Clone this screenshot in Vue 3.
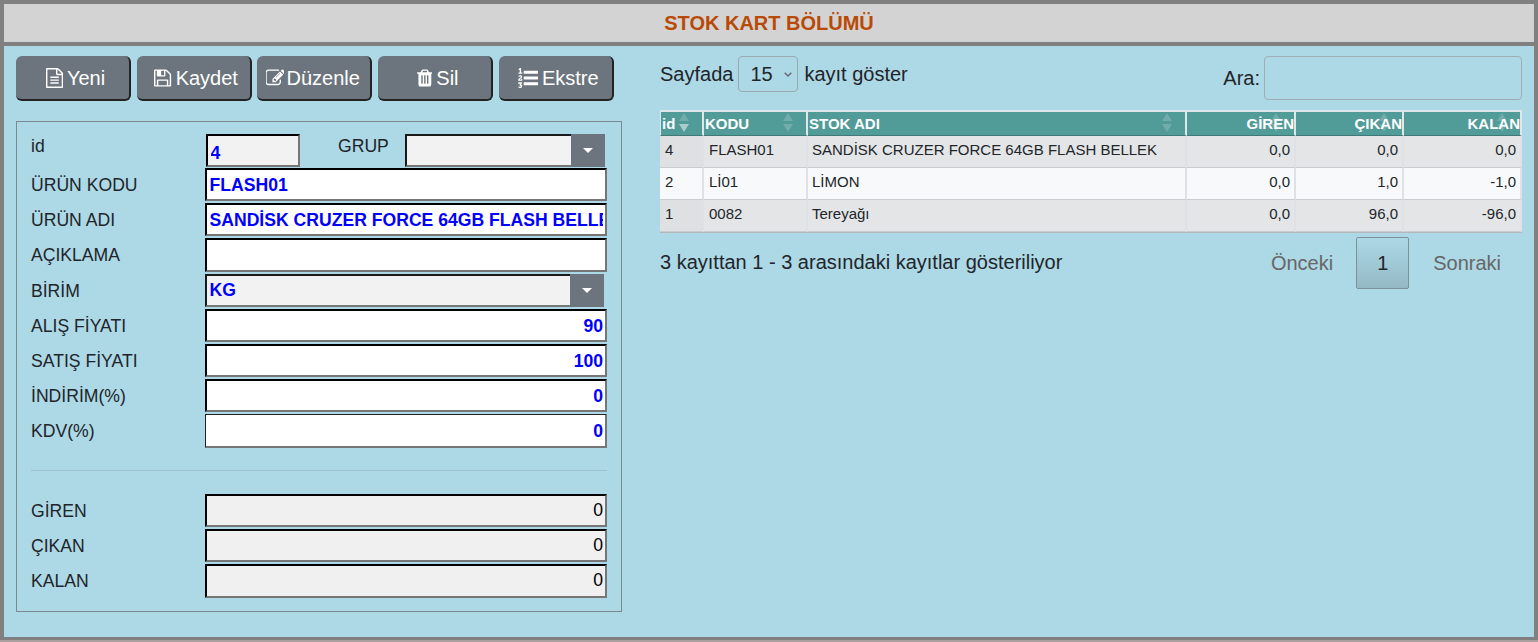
<script setup>
const icons = {
  file: { w: 1536, x: 128, d: 'M1596 380q28 28 48 76t20 88v1152q0 40-28 68t-68 28h-1344q-40 0-68-28t-28-68v-1600q0-40 28-68t68-28h896q40 0 88 20t76 48zm-444-244v376h376q-10-29-22-41l-313-313q-12-12-41-22zm384 1528v-1024h-416q-40 0-68-28t-28-68v-416h-768v1536h1280zm-1024-864q0-14 9-23t23-9h704q14 0 23 9t9 23v64q0 14-9 23t-23 9h-704q-14 0-23-9t-9-23v-64zm736 224q14 0 23 9t9 23v64q0 14-9 23t-23 9h-704q-14 0-23-9t-9-23v-64q0-14 9-23t23-9h704zm0 256q14 0 23 9t9 23v64q0 14-9 23t-23 9h-704q-14 0-23-9t-9-23v-64q0-14 9-23t23-9h704z' },
  save: { w: 1536, x: 128, d: 'M512 1536h768v-384h-768v384zm896 0h128v-896q0-14-10-38.5t-20-34.5l-281-281q-10-10-34-20t-39-10v416q0 40-28 68t-68 28h-576q-40 0-68-28t-28-68v-416h-128v1280h128v-416q0-40 28-68t68-28h832q40 0 68 28t28 68v416zm-384-928v-320q0-13-9.5-22.5t-22.5-9.5h-192q-13 0-22.5 9.5t-9.5 22.5v320q0 13 9.5 22.5t22.5 9.5h192q13 0 22.5-9.5t9.5-22.5zm640 32v928q0 40-28 68t-68 28h-1344q-40 0-68-28t-28-68v-1344q0-40 28-68t68-28h928q40 0 88 20t76 48l280 280q28 28 48 76t20 88z' },
  edit: { w: 1664, x: 64, d: 'M888 1184l116-116-152-152-116 116v56h96v96h56zm440-720q-16-16-33 1l-350 350q-17 17-1 33t33-1l350-350q17-17 1-33zm80 594v190q0 119-84.5 203.5t-203.5 84.5h-832q-119 0-203.5-84.5t-84.5-203.5v-832q0-119 84.5-203.5t203.5-84.5h832q63 0 117 25 15 7 18 23 3 17-9 29l-49 49q-14 14-32 8-23-6-45-6h-832q-66 0-113 47t-47 113v832q0 66 47 113t113 47h832q66 0 113-47t47-113v-126q0-13 9-22l64-64q15-15 35-7t20 29zm-96-738l288 288-672 672h-288v-288zm444 132l-92 92-288-288 92-92q28-28 68-28t68 28l152 152q28 28 28 68t-28 68z' },
  trash: { w: 1408, x: 192, d: 'M704 1376v-704q0-14-9-23t-23-9h-64q-14 0-23 9t-9 23v704q0 14 9 23t23 9h64q14 0 23-9t9-23zm256 0v-704q0-14-9-23t-23-9h-64q-14 0-23 9t-9 23v704q0 14 9 23t23 9h64q14 0 23-9t9-23zm256 0v-704q0-14-9-23t-23-9h-64q-14 0-23 9t-9 23v704q0 14 9 23t23 9h64q14 0 23-9t9-23zm-544-992h448l-48-117q-7-9-17-11h-317q-10 2-17 11zm928 32v64q0 14-9 23t-23 9h-96v948q0 83-47 143.5t-113 60.5h-832q-66 0-113-58.5t-47-141.5v-952h-96q-14 0-23-9t-9-23v-64q0-14 9-23t23-9h309l70-167q15-37 54-63t79-26h320q40 0 79 26t54 63l70 167h309q14 0 23 9t9 23z' },
  list: { w: 1792, x: 0, d: 'M381 1620q0 80-54.5 126t-135.5 46q-106 0-172-66l57-88q49 45 106 45 29 0 50.5-14.5t21.5-42.5q0-64-105-56l-26-56q8-10 32.5-43.5t42.5-54 37-38.5v-1q-16 0-48.5 1t-48.5 1v53h-106v-152h333v88l-95 115q51 12 81 49t30 88zm2-627v159h-362q-6-36-6-54 0-51 23.5-93t56.5-68 66-47.5 56.5-43.5 23.5-45q0-25-14.5-38.5t-39.5-13.5q-46 0-81 58l-85-59q24-51 71.5-79.5t105.5-28.5q73 0 123 41.5t50 112.5q0 50-34 91.5t-75 64.5-75.5 50.5-35.5 52.5h127v-60h105zm1409 319v192q0 13-9.5 22.5t-22.5 9.5h-1216q-13 0-22.5-9.5t-9.5-22.5v-192q0-14 9-23t23-9h1216q13 0 22.5 9.5t9.5 22.5zm-1408-899v99h-335v-99h107q0-41 .5-122t.5-121v-12h-2q-8 17-50 54l-71-76 136-127h106v404h108zm1408 387v192q0 13-9.5 22.5t-22.5 9.5h-1216q-13 0-22.5-9.5t-9.5-22.5v-192q0-14 9-23t23-9h1216q13 0 22.5 9.5t9.5 22.5zm0-512v192q0 13-9.5 22.5t-22.5 9.5h-1216q-13 0-22.5-9.5t-9.5-22.5v-192q0-13 9.5-22.5t22.5-9.5h1216q13 0 22.5 9.5t9.5 22.5z' }
}
const buttons = [
  { label: 'Yeni', icon: icons.file },
  { label: 'Kaydet', icon: icons.save },
  { label: 'Düzenle', icon: icons.edit, tight: true },
  { label: 'Sil', icon: icons.trash },
  { label: 'Ekstre', icon: icons.list }
]
const mainFields = [
  { label: 'ÜRÜN KODU', value: 'FLASH01' },
  { label: 'ÜRÜN ADI', value: 'SANDİSK CRUZER FORCE 64GB FLASH BELLEK' },
  { label: 'AÇIKLAMA', value: '' }
]
const priceFields = [
  { label: 'ALIŞ FİYATI', value: '90' },
  { label: 'SATIŞ FİYATI', value: '100' },
  { label: 'İNDİRİM(%)', value: '0' },
  { label: 'KDV(%)', value: '0', thin: true }
]
const totals = ['GİREN', 'ÇIKAN', 'KALAN']
const rows = [
  ['4', 'FLASH01', 'SANDİSK CRUZER FORCE 64GB FLASH BELLEK', '0,0', '0,0', '0,0'],
  ['2', 'Lİ01', 'LİMON', '0,0', '1,0', '-1,0'],
  ['1', '0082', 'Tereyağı', '0,0', '96,0', '-96,0']
]
const heads = [
  { t: 'id', w: 44, first: true }, { t: 'KODU', w: 104 }, { t: 'STOK ADI', w: 379 },
  { t: 'GİREN', w: 109, num: true }, { t: 'ÇIKAN', w: 108, num: true }, { t: 'KALAN', w: 118, num: true }
]
</script>

<template>
  <div class="page">
    <header class="title">STOK KART BÖLÜMÜ</header>
    <main class="content">
      <section class="left">
        <div class="toolbar">
          <button v-for="b in buttons" :key="b.label" class="tbtn" :class="{ tight: b.tight }" type="button">
            <svg class="ico" :viewBox="`${b.icon.x} 0 ${b.icon.w} 1792`" :width="b.icon.w / 89.6" height="20"><path :d="b.icon.d" fill="currentColor" /></svg>{{ b.label }}
          </button>
        </div>
        <div class="box">
          <div class="row top">
            <label class="lbl idl">id</label>
            <input class="inp idv" readonly value="4" />
            <label class="lbl grp">GRUP</label>
            <div class="combo small"><span class="ctext"></span><span class="carrow"><i></i></span></div>
          </div>
          <div v-for="f in mainFields" :key="f.label" class="row">
            <label class="lbl">{{ f.label }}</label>
            <input class="inp wide white" readonly :value="f.value" />
          </div>
          <div class="row">
            <label class="lbl">BİRİM</label>
            <div class="combo"><span class="ctext">KG</span><span class="carrow"><i></i></span></div>
          </div>
          <div v-for="f in priceFields" :key="f.label" class="row">
            <label class="lbl">{{ f.label }}</label>
            <input class="inp wide white num" :class="{ thin: f.thin }" readonly :value="f.value" />
          </div>
          <hr class="sep" />
          <div v-for="t in totals" :key="t" class="row">
            <label class="lbl">{{ t }}</label>
            <input class="inp wide num plain" readonly value="0" />
          </div>
        </div>
      </section>
      <section class="right">
        <div class="tools">
          <div class="len">Sayfada
            <select class="lensel"><option>15</option></select>
            kayıt göster
          </div>
          <div class="search">Ara:<input class="searchbox" /></div>
        </div>
        <table class="grid">
          <colgroup><col v-for="h in heads" :key="h.t" :style="{ width: h.w + 'px' }" /></colgroup>
          <thead>
            <tr>
              <th v-for="h in heads" :key="h.t" :class="{ num: h.num }">
                <span class="sort" :class="{ active: h.first }"><b class="up"></b><b class="down"></b></span>
                <span class="htext">{{ h.t }}</span>
              </th>
            </tr>
          </thead>
          <tbody>
            <tr v-for="r in rows" :key="r[0]">
              <td v-for="(c, i) in r" :key="i" :class="{ num: i > 2, sorted: i === 0 }">{{ c }}</td>
            </tr>
          </tbody>
        </table>
        <div class="foot">
          <div class="info">3 kayıttan 1 - 3 arasındaki kayıtlar gösteriliyor</div>
          <div class="pager"><span class="pg">Önceki</span><span class="cur">1</span><span class="pg">Sonraki</span></div>
        </div>
      </section>
    </main>
  </div>
</template>

<style>
html, body { margin: 0; height: 642px; overflow: hidden; background: #aaa0a0; }
</style>

<style scoped>
.page {
  box-sizing: border-box; width: 1538px; height: 640px; display: flex; flex-direction: column;
  border: solid #808080; border-width: 4px 4px 3px 4px;
  font-family: "Liberation Sans", Arial, sans-serif; color: #212529; background: #add8e6;
}
.title {
  height: 42px; flex: none; box-sizing: border-box; background: #d3d3d3; border-bottom: 4px solid #808080;
  color: #b94a06; font-weight: 700; font-size: 20px; line-height: 38px; text-align: center;
}
.content { flex: 1; display: flex; padding: 10px 12px 0 12px; min-height: 0; }
.left { width: 606px; flex: none; }
.toolbar { display: flex; gap: 5.7px; }
.tbtn {
  width: 115px; height: 45px; box-sizing: border-box; padding: 1px 0 0 6px; display: flex; align-items: center; justify-content: center;
  background: #6c757d; color: #fff; font: 20px "Liberation Sans", Arial, sans-serif;
  border: 0; border-right: 2px solid #222; border-bottom: 2px solid #222; border-radius: 6px;
}
.tbtn.tight { padding: 1px 2px 0 0; }
.ico { flex: none; margin-right: 4px; }
.tight .ico { margin-right: 2px; }
.box { margin-top: 20px; height: 491px; box-sizing: border-box; border: 1px solid #7a8a8f; padding: 12px 14px 0 14px; }
.row { display: flex; height: 35.2px; }
.row.top { height: 34px; }
.lbl { width: 174px; flex: none; font-size: 17.6px; line-height: 34.5px; color: #212529; }
.idl { line-height: 24px; }
.inp {
  box-sizing: border-box; height: 33.2px; margin: 0; padding: 2px 2px 0 2.5px; font: 700 17.6px "Liberation Sans", Arial, sans-serif; color: #0000ff;
  border: 2px inset #767676; border-color: #1a1a1a #767676 #767676 #1a1a1a; background: #fff; outline: none; border-radius: 0;
}
.idv { width: 94px; height: 33px; margin-left: 1px; background: #f2f2f2; padding-top: 5px; }
.grp { width: 67px; margin-left: 38px; line-height: 24px; }
.wide { width: 402px; }
.white { background: #fff; }
.num { text-align: right; }
.plain { background: #f0f0f0; color: #000; font-weight: 400; padding: 1px 2px; }
.thin { border-width: 1px 2px 2px 1px; border-color: #767676; }
.combo {
  box-sizing: border-box; width: 399px; height: 33px; display: flex; background: #f2f2f2;
  border: solid; border-width: 2px 0 2px 2px; border-color: #1a1a1a #767676 #767676 #1a1a1a;
}
.small { width: 200px; }
.ctext { flex: 1; font-weight: 700; font-size: 17.6px; color: #0000ff; line-height: 29px; padding-left: 2.5px; }
.carrow { width: 34px; flex: none; margin: -2px 0; background: #6c757d; display: flex; align-items: center; justify-content: center; }
.carrow i { width: 0; height: 0; border: 5px solid transparent; border-top-color: #fff; border-bottom: 0; }
.sep { border: 0; border-top: 1px solid #9cc3cf; margin: 20.5px 0 23px; }
.right { flex: none; width: 862px; margin-left: 38px; }
.tools { display: flex; justify-content: space-between; height: 54px; font-size: 20px; }
.len { height: 36px; line-height: 34px; display: flex; align-items: center; gap: 5px; white-space: nowrap; }
.lensel {
  appearance: none; width: 60px; height: 36px; box-sizing: border-box; padding: 0 0 0 11px; font: 20px "Liberation Sans", Arial, sans-serif; color: #212529;
  background: transparent url("data:image/svg+xml,%3Csvg xmlns='http://www.w3.org/2000/svg' width='8' height='5'%3E%3Cpath d='M.7.7 4 4 7.3.7' fill='none' stroke='%23667' stroke-width='1.4'/%3E%3C/svg%3E") no-repeat right 5px center;
  border: 1px solid #9aa9ae; border-radius: 4px; margin: 0 1px 0 0;
}
.search { display: flex; gap: 4px; line-height: 44px; }
.searchbox { box-sizing: border-box; width: 258px; height: 44px; background: transparent; border: 1px solid #a0aeb3; border-radius: 4px; margin: 0; }
.grid { table-layout: fixed; width: 862px; border-collapse: separate; border-spacing: 0; font-size: 15px; background: #e4e5e7; border-bottom: 1px solid #b4b8bc; }
.grid th {
  position: relative; box-sizing: border-box; height: 26px; padding: 0 0 0 1px; background: #519b99; color: #fff; text-align: left; font-weight: 700; font-size: 15px;
  border: solid #dfe7ea; border-width: 2px 2px 0 0; border-bottom: 1px solid #3f7a78;
}
.grid th:first-child { border-left: 1px solid #dfe7ea; }
.htext { position: relative; }
.grid td {
  box-sizing: border-box; height: 32px; padding: 0 4px 5px 5px; border-right: 2px solid #e0e1e6; border-bottom: 1px solid #c9ccd0; color: #212529;
}
.grid td:nth-child(3) { padding-left: 4px; }
.grid tr:nth-child(even) td { background: #f8f9fb; }
.grid td.sorted { background: #dfe0e2; }
.grid tr:nth-child(even) td.sorted { background: #f8f9fb; }
.num { text-align: right; }
.grid th.num { text-align: right; }
.sort { position: absolute; right: 13px; top: 1px; display: flex; flex-direction: column; gap: 3px; }
.sort b { width: 0; height: 0; border: 5px solid transparent; }
.sort .up { border-top: 0; border-bottom: 8px solid rgba(255,255,255,.18); }
.sort .down { border-bottom: 0; border-top: 8px solid rgba(255,255,255,.18); }
.sort.active .down { border-top-color: rgba(255,255,255,.5); }
.foot { display: flex; justify-content: space-between; margin-top: 4px; font-size: 20px; }
.info { line-height: 50px; }
.pager { display: flex; align-items: center; margin-right: 21px; }
.pg { color: #666; line-height: 52px; }
.cur { box-sizing: border-box; width: 53px; height: 52px; line-height: 50px; text-align: center; border: 1px solid #7d9199; border-radius: 2px; background: linear-gradient(#add8e6, #94b9c5); margin: 0 24px 0 23px; }
</style>
